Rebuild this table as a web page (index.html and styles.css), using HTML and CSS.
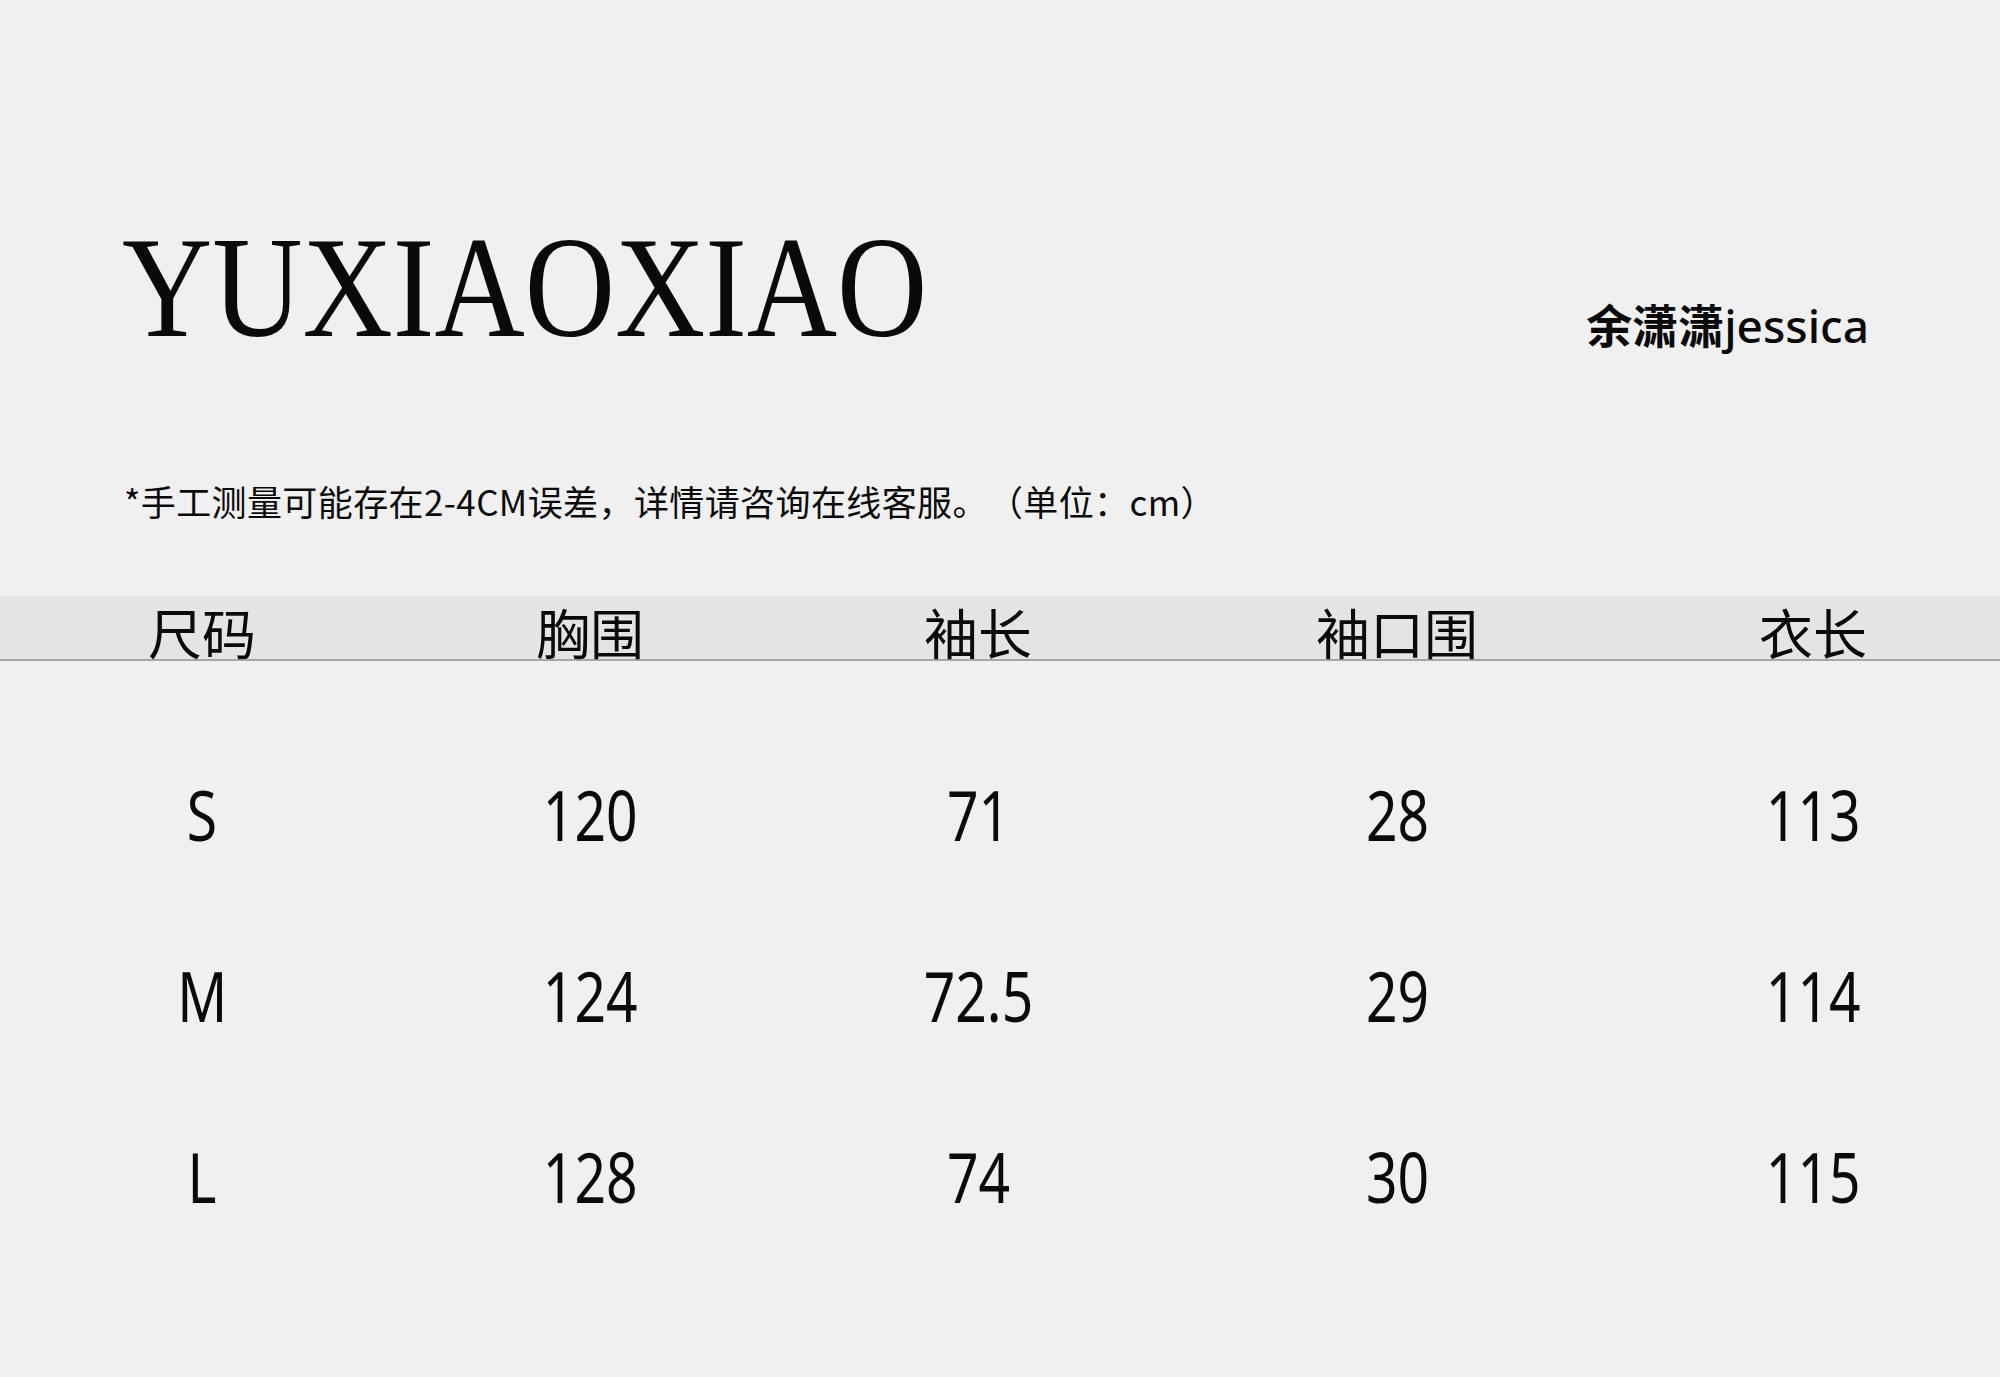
FILE: index.html
```html
<!DOCTYPE html>
<html lang="zh">
<head>
<meta charset="utf-8">
<title>YUXIAOXIAO 尺码表</title>
<link rel="stylesheet" href="styles.css">
</head>
<body>
<div class="page">
  <header class="top">
    <div class="brand"><span class="brand-text">YUXIAOXIAO</span></div>
    <div class="author"><span class="author-cjk">余潇潇</span>jessica</div>
  </header>
  <p class="note">*手工测量可能存在2-4CM误差，详情请咨询在线客服。（单位：cm）</p>
  <div class="table">
    <div class="row head">
      <div class="cell">尺码</div>
      <div class="cell">胸围</div>
      <div class="cell">袖长</div>
      <div class="cell">袖口围</div>
      <div class="cell">衣长</div>
    </div>
    <div class="body">
      <div class="row data">
        <div class="cell"><span class="num">S</span></div>
        <div class="cell"><span class="num">120</span></div>
        <div class="cell"><span class="num">71</span></div>
        <div class="cell"><span class="num">28</span></div>
        <div class="cell"><span class="num">113</span></div>
      </div>
      <div class="row data">
        <div class="cell"><span class="num">M</span></div>
        <div class="cell"><span class="num">124</span></div>
        <div class="cell"><span class="num">72.5</span></div>
        <div class="cell"><span class="num">29</span></div>
        <div class="cell"><span class="num">114</span></div>
      </div>
      <div class="row data">
        <div class="cell"><span class="num">L</span></div>
        <div class="cell"><span class="num">128</span></div>
        <div class="cell"><span class="num">74</span></div>
        <div class="cell"><span class="num">30</span></div>
        <div class="cell"><span class="num">115</span></div>
      </div>
    </div>
  </div>
</div>
</body>
</html>
```
FILE: styles.css
```css
html, body {
  margin: 0;
  padding: 0;
}
body {
  background: #f0f0f0;
  color: #0a0a0a;
  width: 2000px;
  height: 1377px;
  overflow: hidden;
}
.page {
  width: 2000px;
  height: 1377px;
  overflow: hidden;
  display: flex;
  flex-direction: column;
}
.top {
  display: flex;
  justify-content: space-between;
  align-items: flex-start;
  padding: 215px 131px 0 122px;
  height: 147px;
}
.brand {
  font-family: "Liberation Serif", serif;
  font-size: 145px;
  line-height: 1;
  white-space: nowrap;
}
.brand-text {
  display: inline-block;
  transform: scaleX(0.862);
  transform-origin: left top;
}
.author {
  margin-top: 85px;
  font-family: "Noto Sans", "Noto Sans CJK SC", sans-serif;
  font-size: 46px;
  line-height: 1;
  font-weight: 500;
  white-space: nowrap;
}
.author-cjk {
  font-family: "Noto Sans CJK SC", sans-serif;
  font-weight: 700;
}
.note {
  margin: 121px 0 0 124px;
  font-family: "Noto Sans CJK SC", sans-serif;
  font-size: 35px;
  line-height: 1;
  letter-spacing: 0.4px;
  text-spacing-trim: space-all;
  white-space: nowrap;
}
.table {
  margin-top: 78px;
}
.row {
  display: grid;
  grid-template-columns: 404px 372px 404px 434px 398px;
}
.cell {
  text-align: center;
  white-space: nowrap;
}
.head {
  background: #e4e4e4;
  border-bottom: 2px solid #a6a6a6;
  padding-top: 9px;
  font-family: "Noto Sans CJK SC", sans-serif;
  font-size: 54px;
  line-height: 54px;
}
.body {
  padding-top: 63px;
}
.data {
  font-family: "Noto Sans", sans-serif;
  font-size: 69px;
  font-weight: 400;
  line-height: 181px;
}
.num {
  display: inline-block;
  transform: scaleX(0.8);
  transform-origin: center;
}
```
